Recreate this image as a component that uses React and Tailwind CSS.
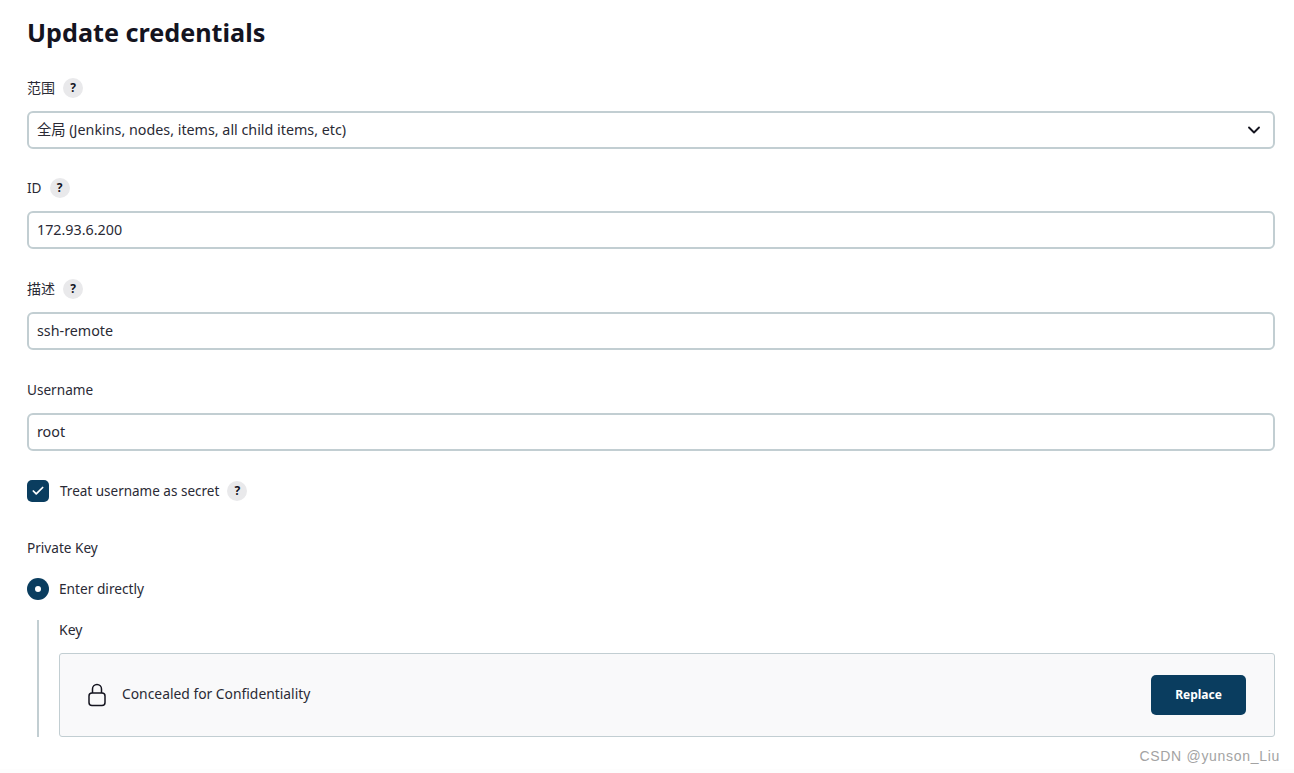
import { Check, ChevronDown } from "lucide-react";

const cjk = "font-['Noto_Sans','Noto_Sans_CJK_SC',sans-serif]";

function Help() {
  return (
    <span className="flex h-5 w-5 shrink-0 items-center justify-center rounded-full bg-[#e9e9eb] text-xs font-bold text-[#14141f]">
      ?
    </span>
  );
}

function Field({ label, help, value, select, wide }) {
  return (
    <div className={select ? "mb-[27px]" : "mb-[28px]"}>
      <div className={`mb-[11px] flex h-[24px] items-center gap-2 ${wide ? "text-sm" : "text-[13.6px]"}`}>
        <span>{label}</span>
        {help && <Help />}
      </div>
      <div className="flex h-[38px] items-center justify-between rounded-md border-2 border-[#c2ced2] pl-2 pr-[9px] text-[14.3px]">
        <span>{value}</span>
        {select && <ChevronDown size={20} strokeWidth={2.25} className="text-[#14141f]" />}
      </div>
    </div>
  );
}

export default function App() {
  return (
    <div className={`h-[773px] overflow-hidden border-b-[4px] border-[#fdfdfd] bg-white pl-[27px] pr-[19px] pt-[13px] text-[#2a2a35] ${cjk}`}>
      <h1 className="mb-[25px] h-[38px] text-[25.2px] leading-[38px] font-bold text-[#14141f]">Update credentials</h1>

      <Field label="范围" help wide value="全局 (Jenkins, nodes, items, all child items, etc)" select />
      <Field label="ID" help value="172.93.6.200" />
      <Field label="描述" help wide value="ssh-remote" />
      <Field label="Username" value="root" />

      <div className="mb-[34px] mt-[29px] flex h-[22px] items-center text-[13.5px]">
        <span className="mr-[11px] flex h-[22px] w-[22px] items-center justify-center rounded-[5px] bg-[#0a3d5f]">
          <Check size={14} strokeWidth={3} className="text-white" />
        </span>
        <span className="mr-2">Treat username as secret</span>
        <Help />
      </div>

      <div className="mb-[18px] h-[24px] text-[13.6px] leading-[24px]">Private Key</div>

      <div className="mb-[20px] flex h-[22px] items-center text-[13.7px]">
        <span className="mr-[10px] flex h-[22px] w-[22px] items-center justify-center rounded-full bg-[#0a3d5f]">
          <span className="h-[6px] w-[6px] rounded-full bg-white" />
        </span>
        <span>Enter directly</span>
      </div>

      <div className="ml-[10px] border-l-2 border-[#c2ced2] pl-[20px]">
        <div className="mb-[13px] h-[20px] text-sm leading-[20px]">Key</div>
        <div className="relative flex h-[84px] items-center justify-between rounded-[3px] border border-[#c2ced2] bg-[#f9f9fa] pl-[27px] pr-[28px]">
          <div className="flex items-center gap-[15px] text-[13.85px]">
            <svg width="20" height="24" viewBox="0 0 20 24" fill="none" stroke="#14141f" strokeWidth="1.5" strokeLinejoin="round">
              <rect x="2" y="10" width="16" height="12.5" rx="3" />
              <path d="M5.5 10V6a4.5 4.5 0 0 1 9 0v4" />
            </svg>
            <span className="mb-[2px]">Concealed for Confidentiality</span>
          </div>
          <button className="h-10 w-[95px] rounded-[5px] bg-[#0a3d5f] text-xs font-bold text-white">Replace</button>
          <span className="absolute right-[-6px] top-[92px] whitespace-nowrap font-['Liberation_Sans',sans-serif] text-sm tracking-[0.7px] text-[#a3a3a3]">
            CSDN @yunson_Liu
          </span>
        </div>
      </div>
    </div>
  );
}
